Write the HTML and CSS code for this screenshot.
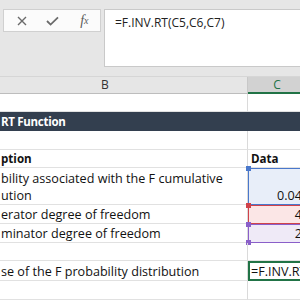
FILE: index.html
```
<!DOCTYPE html>
<html>
<head>
<meta charset="utf-8">
<link rel="stylesheet" href="styles.css">
</head>
<body>
<div class="app">
  <div class="toolbar">
    <div class="fxbox">
      <span class="ico">
        <svg width="10" height="10" viewBox="0 0 10 10"><path d="M1 1 L9 9 M9 1 L1 9" stroke="#6a6a6a" stroke-width="1.4" fill="none"/></svg>
      </span>
      <span class="ico">
        <svg width="13" height="10" viewBox="0 0 13 10"><path d="M1 5 L4.6 8.6 L12 1.4" stroke="#6a6a6a" stroke-width="1.8" fill="none"/></svg>
      </span>
      <span class="ico fx">f<sub>x</sub></span>
    </div>
    <div class="formula">=F.INV.RT(C5,C6,C7)</div>
  </div>
  <div class="colheads">
    <div class="ch ch-b">B</div>
    <div class="ch ch-c">C</div>
  </div>
  <div class="sheet">
    <div class="row r18"><div class="cell b"></div><div class="cell c"></div></div>
    <div class="row r19 title"><div class="cell b"><span>RT Function</span></div><div class="cell c"></div></div>
    <div class="row r19"><div class="cell b"></div><div class="cell c"></div></div>
    <div class="row r18 head"><div class="cell b"><span>ption</span></div><div class="cell c"><span>Data</span></div></div>
    <div class="row r37"><div class="cell b"><span>bility associated with the F cumulative<br>ution</span></div><div class="cell c num ref blue"><span>0.04</span></div></div>
    <div class="row r19"><div class="cell b"><span>erator degree of freedom</span></div><div class="cell c num ref red"><span>4</span></div></div>
    <div class="row r19"><div class="cell b"><span>minator degree of freedom</span></div><div class="cell c num ref purple end"><span>2</span></div></div>
    <div class="row r18"><div class="cell b"></div><div class="cell c"></div></div>
    <div class="row r20"><div class="cell b"><span>se of the F probability distribution</span></div><div class="cell c active"><span>=F.INV.RT(C5,C6,C7)</span></div></div>
    <div class="row r19"><div class="cell b"></div><div class="cell c"></div></div>
  </div>
</div>
</body>
</html>
```

FILE: styles.css
```
html, body {
  margin: 0;
  padding: 0;
  background: #ffffff;
}
.app {
  width: 300px;
  height: 300px;
  overflow: hidden;
  font-family: "Open Sans", "Noto Sans", sans-serif;
}
.toolbar {
  background: #e6e6e6;
  height: 76px;
  box-sizing: border-box;
  padding-top: 9px;
  display: flex;
  align-items: flex-start;
}
.fxbox {
  margin-left: 3px;
  width: 98px;
  height: 23px;
  box-sizing: border-box;
  border: 1px solid #d0d0d0;
  background: #fbfbfb;
  display: flex;
  align-items: center;
  padding-left: 2px;
}
.ico {
  display: flex;
  align-items: center;
  justify-content: center;
  width: 32px;
  height: 20px;
}
.ico.fx {
  font-family: "Liberation Serif", serif;
  font-style: italic;
  font-size: 14px;
  color: #5a5a5a;
  line-height: 20px;
}
.ico.fx sub {
  font-size: 10px;
  vertical-align: -1px;
}
.formula {
  margin-left: 3px;
  flex: 1;
  height: 58px;
  box-sizing: border-box;
  border: 1px solid #c9c9c9;
  border-right: none;
  background: #ffffff;
  padding: 4px 0 0 10px;
  font-size: 12px;
  line-height: 17px;
  color: #222;
  white-space: nowrap;
}
.colheads {
  display: flex;
  height: 18px;
  box-sizing: border-box;
  border-top: 1px solid #d6d6d6;
  background: #e6e6e6;
  font-size: 12px;
  color: #333;
}
.ch {
  box-sizing: border-box;
  height: 17px;
  line-height: 16px;
  flex: none;
}
.ch-b {
  width: 248px;
  padding-left: 101px;
  border-bottom: 1px solid #bdbdbd;
  border-right: 1px solid #c8c8c8;
}
.ch-c {
  width: 58px;
  text-align: center;
  background: #d2d2d2;
  border-bottom: 2px solid #217346;
  color: #217346;
}
.sheet {
  font-size: 12.6px;
  color: #111;
}
.row {
  display: flex;
  box-sizing: border-box;
}
.r18 { height: 18px; }
.r19 { height: 19px; }
.r20 { height: 20px; }
.r37 { height: 37px; }
.cell {
  box-sizing: border-box;
  height: 100%;
  flex: none;
  display: flex;
  align-items: flex-end;
  line-height: 17px;
  white-space: nowrap;
  overflow: visible;
  border-bottom: 1px solid #e1e1e1;
  position: relative;
}
.cell.b {
  width: 248px;
  padding-left: 1px;
  border-right: 1px solid #dadada;
}
.cell.c {
  width: 58px;
  padding: 0 3px;
}
.title .cell {
  background: #333f4f;
  color: #ffffff;
  font-weight: 700;
  font-size: 11.5px;
  letter-spacing: -0.3px;
  border-bottom-color: #333f4f;
  border-right-color: #333f4f;
}
.head .cell {
  font-weight: 700;
  font-size: 11.6px;
}
.num {
  justify-content: flex-end;
}
.ref {
  border: 1px solid;
}
.ref.blue {
  background: #e8eef9;
  border-color: #4a78cc;
}
.ref.red {
  background: #fbe6e6;
  border-color: #d0424a;
}
.ref.purple {
  background: #efeaf7;
  border-color: #8a5fc9;
}
.ref::before {
  content: "";
  position: absolute;
  left: -3px;
  top: -3px;
  width: 5px;
  height: 5px;
}
.ref.end::after {
  content: "";
  position: absolute;
  left: -3px;
  bottom: -3px;
  width: 5px;
  height: 5px;
  background: #8a5fc9;
}
.ref.blue::before { background: #4a78cc; }
.ref.red::before { background: #d0424a; }
.ref.purple::before { background: #8a5fc9; }
.active {
  border: 2px solid #217346;
  padding: 0 1px !important;
  overflow: hidden;
  align-items: center;
}
```
